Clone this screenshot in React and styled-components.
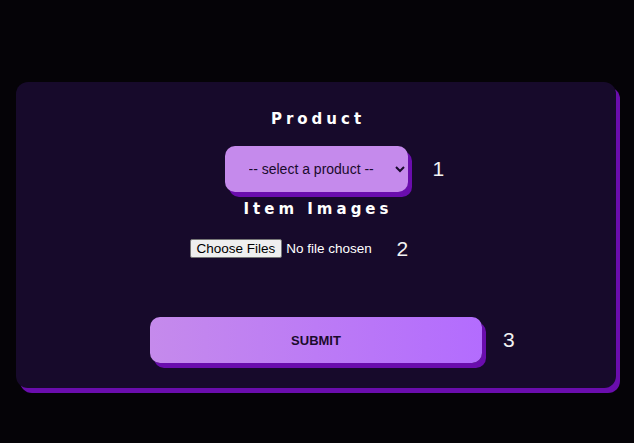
import styled, { createGlobalStyle } from "styled-components";

const GlobalStyle = createGlobalStyle`
  html, body {
    margin: 0;
    padding: 0;
    background: #050307;
    font-family: "Liberation Sans", Arial, sans-serif;
  }
`;

const Page = styled.div`
  min-height: 443px;
  box-sizing: border-box;
  padding: 82px 18px 40px 16px;
`;

const Card = styled.form`
  background: #170a2b;
  border-radius: 12px;
  box-shadow: 4px 5px 0 #6a0dad;
  height: 306px;
  box-sizing: border-box;
  padding: 27px 0 0;
  display: flex;
  flex-direction: column;
  align-items: center;
`;

const Label = styled.label`
  color: #ffffff;
  font-family: "DejaVu Sans", "Open Sans", sans-serif;
  font-weight: 700;
  font-size: 15px;
  letter-spacing: 4px;
  line-height: 20px;
  margin-left: 4px;
  margin-bottom: ${(p) => p.$gap}px;
`;

const Field = styled.div`
  position: relative;
  display: flex;
  justify-content: center;
  margin-bottom: ${(p) => p.$gap}px;
`;

const Marker = styled.span`
  position: absolute;
  left: ${(p) => p.$left}px;
  top: 50%;
  transform: translateY(-50%);
  color: #f2f2f2;
  font-family: "Liberation Sans", Arial, sans-serif;
  font-size: 21px;
  font-weight: 300;
`;

const Select = styled.select`
  width: 183px;
  height: 46px;
  border: none;
  border-radius: 10px;
  background: #c58aec;
  box-shadow: 4px 5px 0 #6a0dad;
  padding: 0 8px 0 20px;
  font-family: "Liberation Sans", Arial, sans-serif;
  font-size: 14px;
  color: #1a0b2c;
  outline: none;
`;

const FileInput = styled.input`
  width: 253px;
  color: #ffffff;
  font-family: "Liberation Sans", Arial, sans-serif;
  font-size: 13.5px;

  &::file-selector-button {
    font-family: "Liberation Sans", Arial, sans-serif;
    font-size: 13.5px;
    color: #000;
    background: #efefef;
    border: 1px solid #767676;
    border-radius: 2px;
    padding: 1px 6px;
    margin-right: 4px;
  }
`;

const Submit = styled.button`
  width: 332px;
  height: 46px;
  border: none;
  border-radius: 10px;
  background: linear-gradient(90deg, #c58aec, #b36cfe);
  box-shadow: 4px 5px 0 #6a0dad;
  color: #1a0b2c;
  font-family: "Liberation Sans", Arial, sans-serif;
  font-weight: 700;
  font-size: 13px;
  cursor: pointer;
`;

const App = () => {
  return (
    <>
      <GlobalStyle />
      <Page>
        <Card onSubmit={(e) => e.preventDefault()}>
          <Label $gap={17}>Product</Label>
          <Field $gap={7}>
            <Select defaultValue="">
              <option value="" disabled>
                -- select a product --
              </option>
              <option value="a">Product A</option>
              <option value="b">Product B</option>
            </Select>
            <Marker $left={208}>1</Marker>
          </Field>
          <Label $gap={20}>Item Images</Label>
          <Field $gap={59}>
            <FileInput type="file" multiple />
            <Marker $left={207}>2</Marker>
          </Field>
          <Field>
            <Submit type="submit">SUBMIT</Submit>
            <Marker $left={353}>3</Marker>
          </Field>
        </Card>
      </Page>
    </>
  );
};

export default App;
